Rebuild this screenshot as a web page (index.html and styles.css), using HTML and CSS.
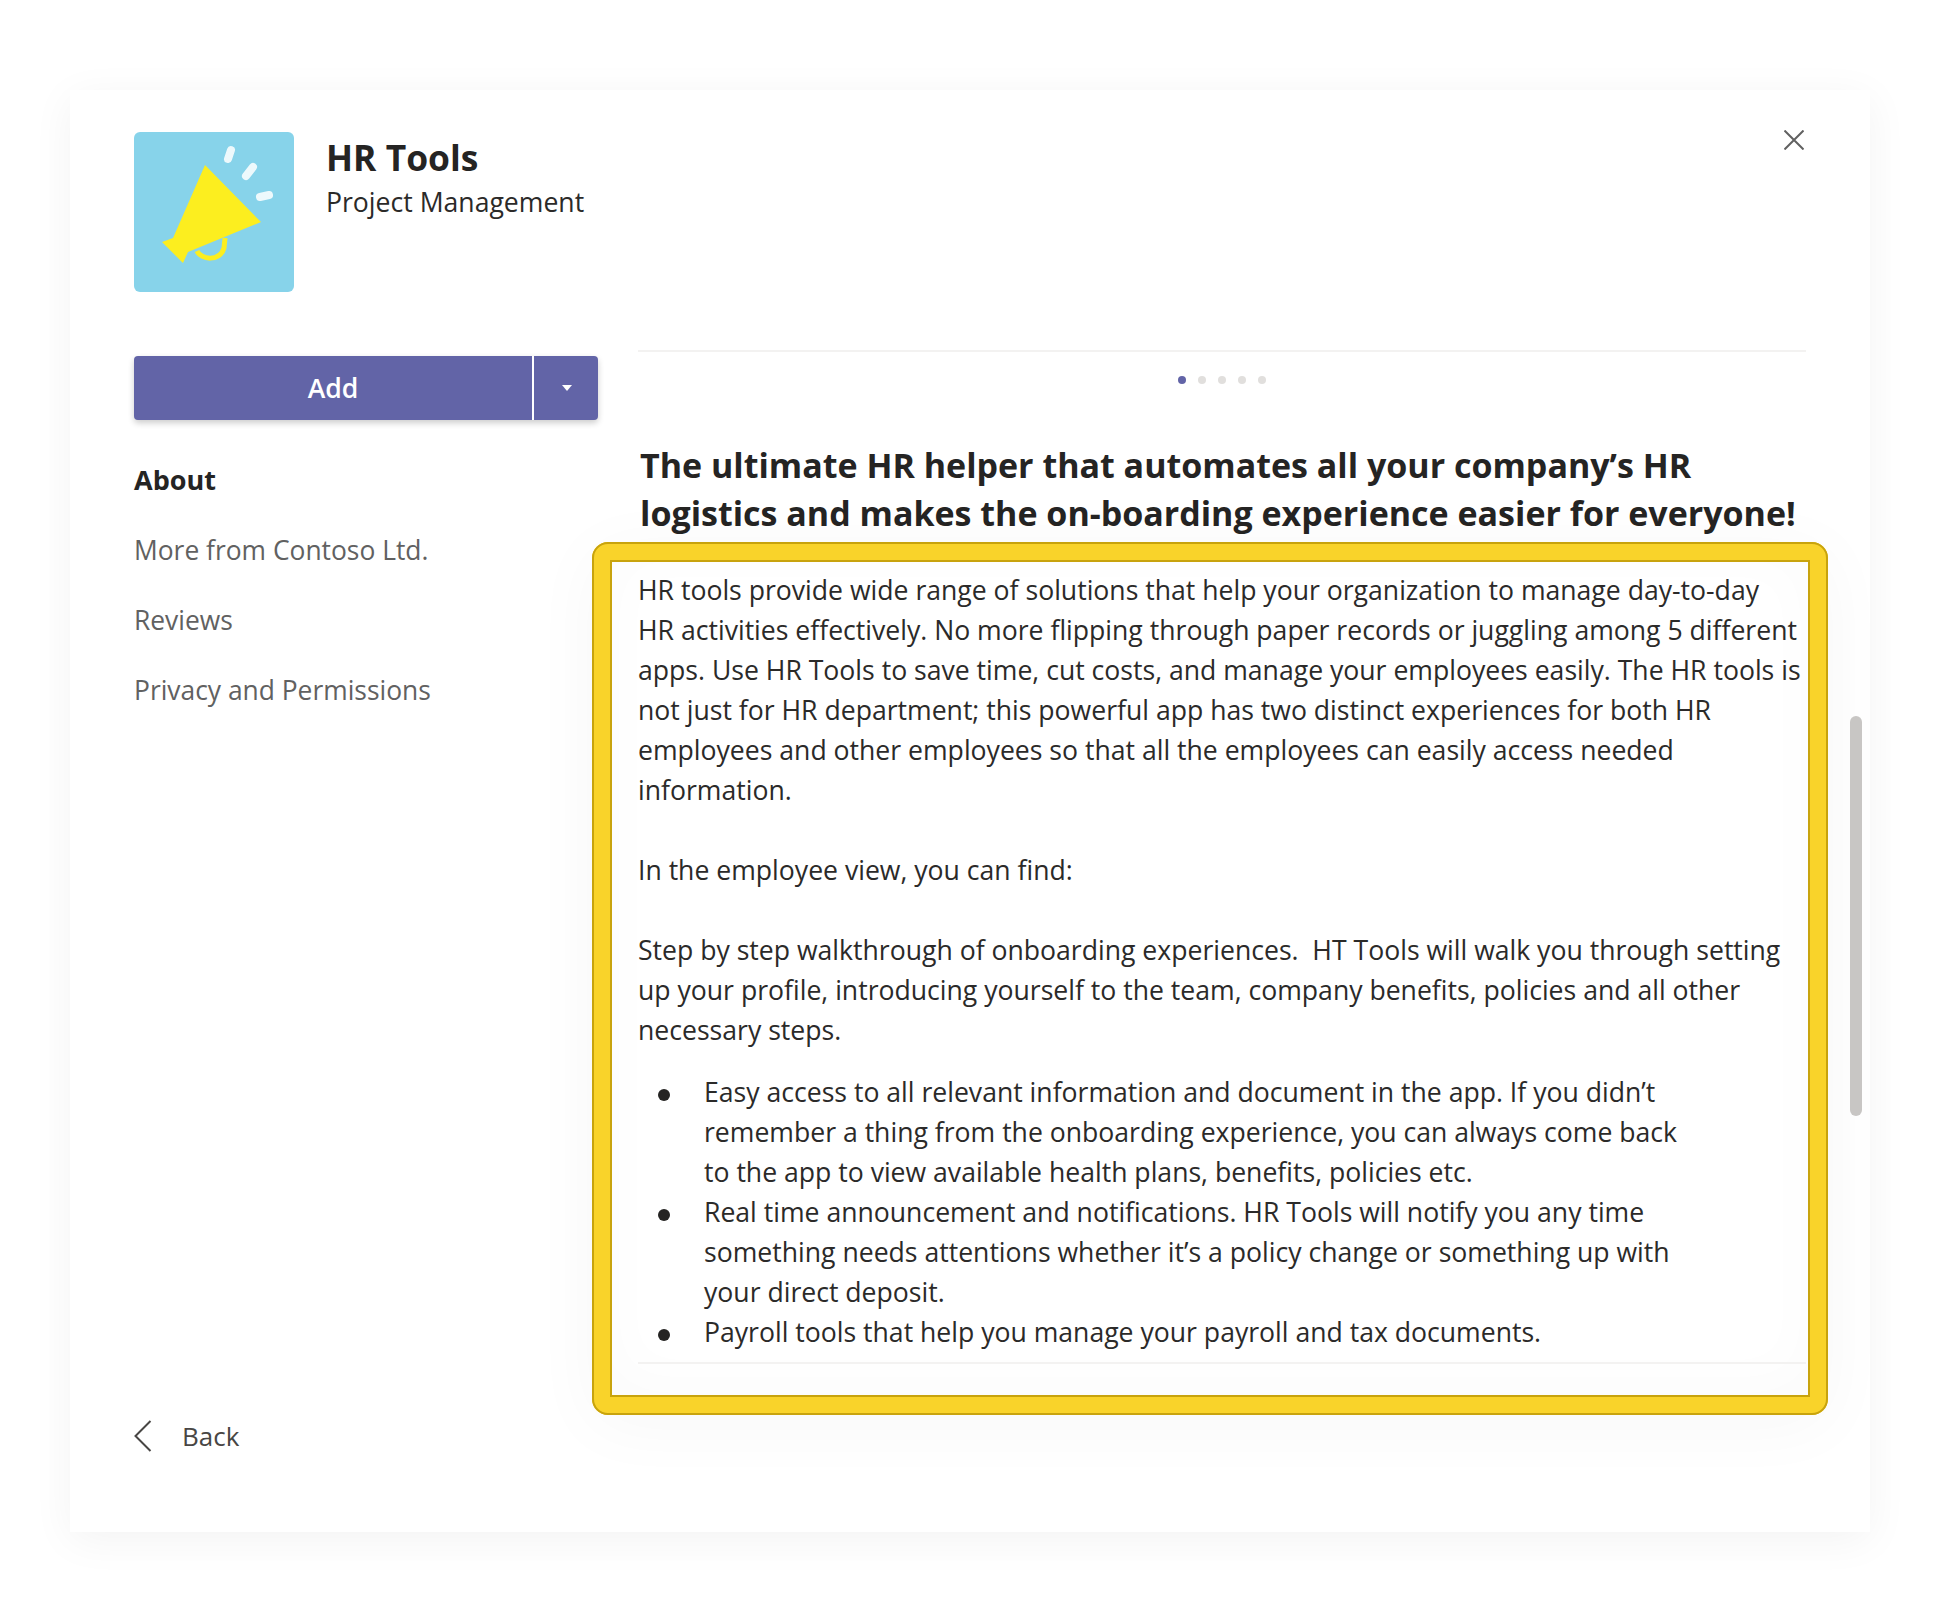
FILE: index.html
```html
<!DOCTYPE html>
<html lang="en">
<head>
  <meta charset="UTF-8">
  <meta name="viewport" content="width=device-width, initial-scale=1.0">
  <title>HR Tools</title>
  <link rel="stylesheet" href="styles.css">
</head>
<body>
  <div class="card">
    <button class="close" aria-label="Close">
      <svg width="20" height="20" viewBox="0 0 20 20"><path d="M0.5 0.5L19.5 19.5M19.5 0.5L0.5 19.5" /></svg>
    </button>

    <header class="app-head">
      <div class="app-icon">
        <svg width="160" height="160" viewBox="0 0 160 160">
          <path class="horn" d="M71 33L127 90L54 120L49 131L28 110L39 106Z" />
          <path class="handle" d="M63 119C67 128 86 130 90 116L91 106" />
          <path class="ray" d="M97 18L94 27M119 35L112 44M135 63L126 65" />
        </svg>
      </div>
      <div>
        <h1>HR Tools</h1>
        <p class="category">Project Management</p>
      </div>
    </header>

    <div class="columns">
      <aside class="side">
        <div class="add-btn">
          <span class="add-main">Add</span>
          <span class="add-drop"><i class="caret"></i></span>
        </div>
        <nav class="side-nav">
          <a class="active">About</a>
          <a>More from Contoso Ltd.</a>
          <a>Reviews</a>
          <a>Privacy and Permissions</a>
        </nav>
        <a class="back">
          <svg width="18" height="32" viewBox="0 0 18 32"><path d="M16.5 1L1.5 16L16.5 31" /></svg>
          Back
        </a>
      </aside>

      <main class="detail">
        <div class="rule"></div>
        <div class="dots">
          <span class="dot on"></span>
          <span class="dot"></span>
          <span class="dot"></span>
          <span class="dot"></span>
          <span class="dot"></span>
        </div>
        <h2>The ultimate HR helper that automates all your company’s HR<br>logistics and makes the on-boarding experience easier for everyone!</h2>

        <section class="highlight">
          <p>HR tools provide wide range of solutions that help your organization to manage day-to-day<br>
          HR activities effectively. No more flipping through paper records or juggling among 5 different<br>
          apps. Use HR Tools to save time, cut costs, and manage your employees easily. The HR tools is<br>
          not just for HR department; this powerful app has two distinct experiences for both HR<br>
          employees and other employees so that all the employees can easily access needed<br>
          information.</p>
          <p>In the employee view, you can find:</p>
          <p>Step by step walkthrough of onboarding experiences.&nbsp; HT Tools will walk you through setting<br>
          up your profile, introducing yourself to the team, company benefits, policies and all other<br>
          necessary steps.</p>
          <ul>
            <li>Easy access to all relevant information and document in the app. If you didn’t<br>
            remember a thing from the onboarding experience, you can always come back<br>
            to the app to view available health plans, benefits, policies etc.</li>
            <li>Real time announcement and notifications. HR Tools will notify you any time<br>
            something needs attentions whether it’s a policy change or something up with<br>
            your direct deposit.</li>
            <li>Payroll tools that help you manage your payroll and tax documents.</li>
          </ul>
          <div class="rule rule-end"></div>
        </section>
      </main>
    </div>

    <div class="scroll-thumb"></div>
  </div>
</body>
</html>
```

FILE: styles.css
```css
/* General */
* {
  box-sizing: border-box;
}

body {
  margin: 0;
  padding: 90px 64px 66px 70px;
  background: #ffffff;
  color: #2b2a29;
  font-family: "Open Sans", "Noto Sans", Arial, sans-serif;
  font-size: 26.6px;
  line-height: 40px;
}

/* Card */
.card {
  position: relative;
  height: 1442px;
  padding: 42px 64px 0;
  background: #ffffff;
  box-shadow: 0 8px 40px rgba(0, 0, 0, 0.05);
}

.close {
  position: absolute;
  top: 40px;
  right: 66px;
  padding: 0;
  border: none;
  background: none;
}

.close svg {
  display: block;
  fill: none;
  stroke: #616161;
  stroke-width: 2;
}

/* Header */
.app-head {
  display: flex;
  gap: 32px;
  height: 218px;
}

.app-icon {
  width: 160px;
  height: 160px;
  border-radius: 6px;
  background: #87d3ea;
  overflow: hidden;
}

.app-icon svg {
  display: block;
}

.horn {
  fill: #fcee1f;
}

.handle {
  fill: none;
  stroke: #fcee1f;
  stroke-width: 5;
}

.ray {
  fill: none;
  stroke: #ffffff;
  stroke-width: 8;
  stroke-linecap: round;
  opacity: 0.85;
}

h1 {
  margin: 0;
  padding-top: 1px;
  font-size: 35.4px;
  line-height: 48px;
  font-weight: 700;
  color: #252423;
}

.category {
  margin: 0;
  line-height: 43px;
}

/* Columns */
.columns {
  display: flex;
}

.side {
  width: 504px;
  flex: none;
  height: 1122px;
  padding-top: 6px;
  display: flex;
  flex-direction: column;
}

/* Add button */
.add-btn {
  display: flex;
  width: 464px;
  height: 64px;
  border-radius: 4px;
  background: #6264a7;
  box-shadow: 0 3px 6px rgba(0, 0, 0, 0.2);
  color: #ffffff;
  font-weight: 600;
  line-height: 64px;
}

.add-main {
  width: 400px;
  text-align: center;
  border-right: 2px solid #ffffff;
}

.add-drop {
  flex: 1;
  display: flex;
  align-items: center;
  justify-content: center;
  padding-left: 2px;
}

.caret {
  border-top: 6px solid #ffffff;
  border-left: 5px solid transparent;
  border-right: 5px solid transparent;
}

/* Side navigation */
.side-nav {
  display: flex;
  flex-direction: column;
  gap: 30px;
  margin-top: 40px;
  font-size: 26.4px;
  color: #616161;
}

.side-nav .active {
  color: #252423;
  font-size: 27px;
  font-weight: 700;
}

.back {
  display: flex;
  align-items: center;
  gap: 30px;
  margin-top: auto;
  margin-bottom: 16px;
  font-size: 26px;
  color: #484644;
}

.back svg {
  fill: none;
  stroke: #484644;
  stroke-width: 2;
}

/* Detail column */
.detail {
  width: 1168px;
  flex: none;
}

.rule {
  height: 2px;
  background: #f3f2f1;
}

.dots {
  display: flex;
  justify-content: center;
  gap: 12px;
  margin-top: 24px;
}

.dot {
  width: 8px;
  height: 8px;
  border-radius: 50%;
  background: #e1dfdd;
}

.dot.on {
  background: #6264a7;
}

h2 {
  margin: 57px 0 0 2px;
  font-size: 34px;
  line-height: 48px;
  font-weight: 700;
  white-space: nowrap;
  color: #252423;
}

/* Yellow highlight round the description */
.highlight {
  position: relative;
  width: 1236px;
  height: 873px;
  margin: 5px 0 0 -46px;
  padding: 8px 2px 0 26px;
  border: 20px solid #f9d32a;
  border-radius: 16px;
  box-shadow: 0 10px 70px rgba(0, 0, 0, 0.035), inset 0 -10px 60px rgba(0, 0, 0, 0.02);
  white-space: nowrap;
}

.highlight::before {
  content: "";
  position: absolute;
  inset: -20px;
  border: 2px solid #c8a30d;
  border-radius: 16px;
  pointer-events: none;
}

.highlight::after {
  content: "";
  position: absolute;
  inset: -2px;
  border: 2px solid #c8a30d;
  pointer-events: none;
}

.highlight p {
  margin: 0 0 40px;
}

.highlight p:nth-of-type(3) {
  margin-bottom: 22px;
}

.highlight ul {
  margin: 0;
  padding: 0 0 0 66px;
  list-style: none;
}

.highlight li {
  position: relative;
}

.highlight li::before {
  content: "";
  position: absolute;
  left: -46px;
  top: 17px;
  width: 12px;
  height: 12px;
  border-radius: 50%;
  background: #252423;
}

.rule-end {
  margin-top: 10px;
}

/* Scrollbar */
.scroll-thumb {
  position: absolute;
  left: 1780px;
  top: 626px;
  width: 12px;
  height: 400px;
  border-radius: 6px;
  background: #c8c6c4;
}
```
